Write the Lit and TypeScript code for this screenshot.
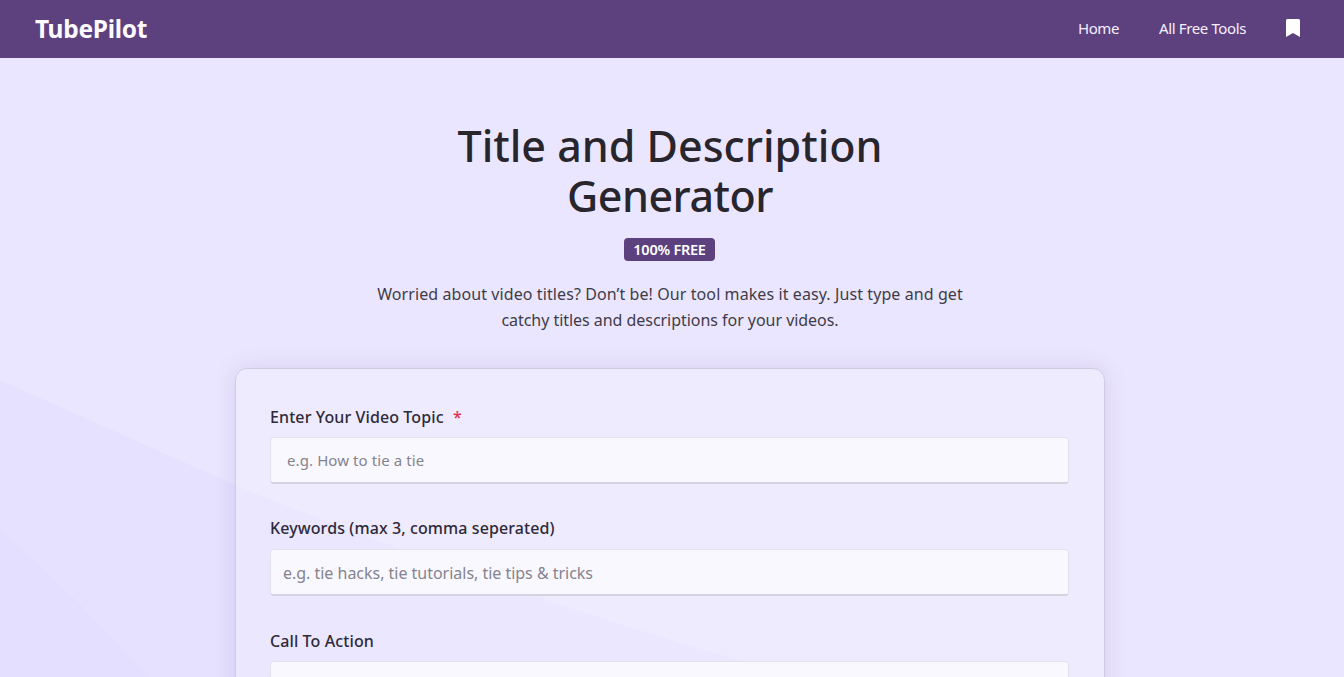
import { LitElement, html, css } from "lit";
import { customElement } from "lit/decorators.js";

@customElement("app-root")
export class AppRoot extends LitElement {
  static styles = css`
    :host {
      display: block;
      position: relative;
      height: 100vh;
      overflow: hidden;
      background: #ebe6ff;
      font-family: "Noto Sans", "Open Sans", sans-serif;
      color: #29262f;
    }
    .bg { position: absolute; inset: 0; width: 100%; height: 100%; }
    header {
      position: relative;
      height: 58px;
      box-sizing: border-box;
      background: #5d417f;
      display: flex;
      align-items: center;
      justify-content: space-between;
      padding: 0 44px 2px 35px;
      color: #fff;
    }
    .logo { font-size: 24.5px; font-weight: 700; letter-spacing: -0.3px; color: #fdfbff; }
    nav { display: flex; align-items: center; gap: 40px; font-size: 15px; letter-spacing: -0.38px; color: #f6effd; }
    nav svg { display: block; width: 14px; height: 18px; }
    main { position: relative; padding: 0 4px 0 0; display: flex; flex-direction: column; align-items: center; }
    h1 {
      margin: 63px 0 0;
      font-size: 43px;
      line-height: 50px;
      font-weight: 500;
      text-align: center;
      width: 560px;
      color: #28262c;
    }
    .gen { display: block; letter-spacing: -0.5px; }
    .badge {
      margin: 17px 1px 0 0;
      height: 23px;
      width: 91px;
      box-sizing: border-box;
      padding-bottom: 2px;
      display: flex;
      align-items: center;
      justify-content: center;
      background: #5d417f;
      color: #fff;
      border-radius: 4px;
      font-size: 14.5px;
      font-weight: 600;
      letter-spacing: -0.25px;
    }
    .lead {
      margin: 20px 0 0;
      font-size: 16px;
      line-height: 26px;
      width: 600px;
      text-align: center;
      color: #3f3c47;
    }
    .l1 { display: block; letter-spacing: 0.09px; }
    .l2 { display: block; letter-spacing: -0.04px; }
    .card {
      margin: 35px 1px 0 0;
      width: 870px;
      box-sizing: border-box;
      padding: 36px 34.5px 35px;
      background: rgba(255, 255, 255, 0.22);
      border: 1px solid #cfcbe0;
      border-radius: 12px;
      box-shadow: 0 0 22px rgba(80, 60, 130, 0.14);
      display: flex;
      flex-direction: column;
    }
    label { display: block; font-size: 16px; line-height: 24px; font-weight: 500; letter-spacing: 0.1px; color: #2d2a3a; }
    .req { color: #e0324a; margin-left: 5px; }
    .field { margin-bottom: 33px; }
    .field label { margin-bottom: 8px; }
    .field label.up { margin-top: -1px; margin-bottom: 9px; }
    input {
      display: block;
      width: 100%;
      height: 47px;
      box-sizing: border-box;
      padding: 0 16px;
      background: #f9f8fe;
      border: 1px solid #e4e1ee;
      border-bottom: 2px solid #d5d2df;
      border-radius: 4px;
      font: inherit;
      font-size: 15px;
      letter-spacing: 0.1px;
      outline: none;
    }
    input.k { padding: 2px 12px 0; font-size: 16px; letter-spacing: -0.02px; }
    input::placeholder { color: #85838f; opacity: 1; }
  `;

  render() {
    return html`
      <svg class="bg" viewBox="0 0 1344 677" preserveAspectRatio="none" aria-hidden="true">
        <path d="M0 380 L240 487 Q520 600 800 677 L0 677 Z" fill="#e6e1ff"></path>
        <path d="M0 530 Q80 600 148 677 L0 677 Z" fill="#e4dfff"></path>
      </svg>
      <header>
        <div class="logo">TubePilot</div>
        <nav>
          <span>Home</span>
          <span>All Free Tools</span>
          <svg viewBox="0 0 14 18"><path fill="#fff" d="M1.6 0h10.8c.9 0 1.6.7 1.6 1.6V18l-7-4-7 4V1.6C0 .7.7 0 1.6 0z"></path></svg>
        </nav>
      </header>
      <main>
        <h1>Title and Description <span class="gen">Generator</span></h1>
        <div class="badge">100% FREE</div>
        <p class="lead"><span class="l1">Worried about video titles? Don’t be! Our tool makes it easy. Just type and get</span> <span class="l2">catchy titles and descriptions for your videos.</span></p>
        <section class="card">
          <div class="field">
            <label>Enter Your Video Topic <span class="req">*</span></label>
            <input placeholder="e.g. How to tie a tie" />
          </div>
          <div class="field">
            <label class="up">Keywords (max 3, comma seperated)</label>
            <input class="k" placeholder="e.g. tie hacks, tie tutorials, tie tips &amp; tricks" />
          </div>
          <div class="field">
            <label>Call To Action</label>
            <input />
          </div>
        </section>
      </main>
    `;
  }
}
